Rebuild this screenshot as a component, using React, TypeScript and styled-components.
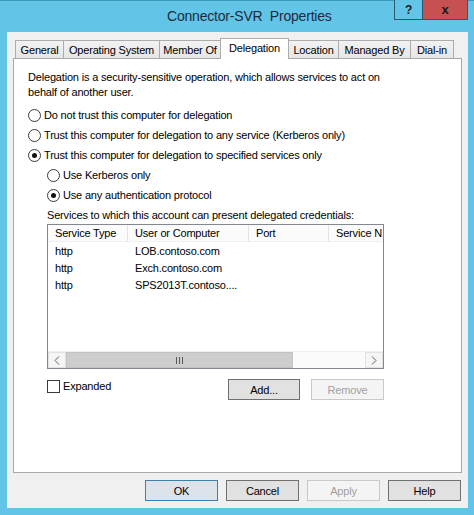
import { createGlobalStyle } from 'styled-components'
import styled from 'styled-components'

const GlobalStyle = createGlobalStyle`
  html, body {
    margin: 0;
    padding: 0;
    background: #62c4e6;
  }
  * {
    box-sizing: border-box;
  }
`

const Window = styled.div`
  width: 474px;
  height: 515px;
  background: #62c4e6;
  border-top: 1px solid #3d98b8;
  padding: 0 6px 7px 7px;
  display: flex;
  flex-direction: column;
  font-family: 'Liberation Sans', Arial, sans-serif;
  font-size: 11px;
  letter-spacing: -0.18px;
  color: #000;
`

const TitleBar = styled.div`
  height: 31px;
  display: flex;
  align-items: flex-start;
`

const Title = styled.div`
  flex: 1;
  padding-left: 160px;
  margin-top: 6px;
  font-size: 14px;
  letter-spacing: -0.2px;
  line-height: 18px;
  color: #1c2c3c;
  white-space: pre;
`

const CaptionButton = styled.div<{ $close?: boolean }>`
  width: ${(p) => (p.$close ? 46 : 29)}px;
  height: 20px;
  margin-top: -1px;
  margin-left: ${(p) => (p.$close ? -1 : 0)}px;
  border: 1px solid #2c5a6c;
  border-top: none;
  background: ${(p) => (p.$close ? '#c75050' : '#62c4e6')};
  color: #1a1a1a;
  font-weight: bold;
  font-size: ${(p) => (p.$close ? 13 : 12)}px;
  display: flex;
  align-items: center;
  justify-content: center;
`

const Body = styled.div`
  flex: 1;
  background: #f0f0f0;
  display: flex;
  flex-direction: column;
  padding: 6px 6px 7px 6px;
`

const TabStrip = styled.div`
  height: 20px;
  display: flex;
  align-items: flex-end;
  padding-left: 2px;
`

const Tab = styled.div<{ $width: number; $active?: boolean }>`
  position: relative;
  z-index: ${(p) => (p.$active ? 2 : 1)};
  width: ${(p) => p.$width}px;
  height: ${(p) => (p.$active ? 21 : 18)}px;
  margin-bottom: ${(p) => (p.$active ? -1 : 0)}px;
  margin-left: -1px;
  &:first-child {
    margin-left: 0;
  }
  border: 1px solid #acacac;
  border-bottom: none;
  background: ${(p) => (p.$active ? '#ffffff' : 'linear-gradient(#f2f2f2, #e6e6e6)')};
  display: flex;
  align-items: center;
  justify-content: center;
  padding-bottom: ${(p) => (p.$active ? 3 : 0)}px;
  white-space: nowrap;
`

const Panel = styled.div`
  flex: 1;
  background: #fff;
  border: 1px solid #a8a8a8;
  padding: 11px 0 0 14px;
  display: flex;
  flex-direction: column;
`

const Description = styled.div`
  line-height: 15px;
`

const RadioGroup = styled.div`
  margin-top: 5px;
  display: flex;
  flex-direction: column;
`

const RadioRow = styled.div<{ $indent?: number }>`
  height: 20px;
  display: flex;
  align-items: center;
  padding-left: ${(p) => p.$indent || 0}px;
`

const RadioCircle = styled.span<{ $checked?: boolean }>`
  width: 13px;
  height: 13px;
  border-radius: 50%;
  border: 1px solid #3a3a3a;
  background: #fff;
  margin-right: 3px;
  display: flex;
  align-items: center;
  justify-content: center;
  &::after {
    content: '';
    width: 5px;
    height: 5px;
    border-radius: 50%;
    background: ${(p) => (p.$checked ? '#111' : 'transparent')};
  }
`

const SectionLabel = styled.div`
  margin-top: 2px;
  padding-left: 19px;
  line-height: 16px;
`

const ListBox = styled.div`
  margin: 1px 0 0 19px;
  width: 337px;
  height: 145px;
  border: 1px solid #828790;
  display: flex;
  flex-direction: column;
  overflow: hidden;
`

const Columns = styled.div<{ $header?: boolean }>`
  display: grid;
  grid-template-columns: 80px 121px 80px 54px;
  height: 17px;
  flex-shrink: 0;
  background: ${(p) => (p.$header ? '#fbfbfb' : 'transparent')};
  border-bottom: ${(p) => (p.$header ? '1px solid #f0f0f0' : 'none')};
`

const Cell = styled.div<{ $header?: boolean }>`
  padding-left: 7px;
  display: flex;
  align-items: center;
  white-space: nowrap;
  overflow: hidden;
  border-right: ${(p) => (p.$header ? '1px solid #e3e3e3' : 'none')};
  &:last-child {
    border-right: none;
  }
`

const ListRows = styled.div`
  flex: 1;
`

const ScrollBar = styled.div`
  height: 17px;
  display: flex;
  background: #f0f0f0;
  border-top: 1px solid #f0f0f0;
`

const ScrollArrow = styled.div`
  width: 18px;
  display: flex;
  align-items: center;
  justify-content: center;
  background: #f5f5f5;
  border: 1px solid #e2e2e2;
`

const Thumb = styled.div<{ $width: number }>`
  width: ${(p) => p.$width}px;
  background: #cdcdcd;
  border: 1px solid #c2c2c2;
  display: flex;
  align-items: center;
  justify-content: center;
  gap: 2px;
`

const Grip = styled.span`
  width: 1px;
  height: 7px;
  background: #5a5a5a;
`

const Track = styled.div`
  flex: 1;
  background: #fafafa;
`

const ActionRow = styled.div`
  margin-top: 10px;
  padding-left: 19px;
  width: 356px;
  display: flex;
  align-items: flex-start;
`

const CheckLabel = styled.label`
  display: flex;
  align-items: center;
  margin-top: 1px;
  line-height: 13px;
  flex: 1;
`

const CheckBox = styled.span`
  width: 13px;
  height: 13px;
  border: 1px solid #3a3a3a;
  background: #fff;
  margin-right: 3px;
`

const Button = styled.button<{ $primary?: boolean; $width?: number }>`
  width: ${(p) => p.$width || 73}px;
  height: 21px;
  margin-left: ${(p) => (p.$width ? 11 : 0)}px;
  padding: 0;
  font-family: 'Liberation Sans', Arial, sans-serif;
  font-size: 11px;
  letter-spacing: -0.18px;
  color: #000;
  background: ${(p) => (p.$primary ? '#dde3ea' : '#e1e1e1')};
  border: 1px solid ${(p) => (p.$primary ? '#3c7fb1' : '#707070')};
  &:first-child {
    margin-left: 0;
  }
  &:disabled {
    color: #a0a0a0;
    background: #f4f4f4;
    border-color: #c9c9c9;
  }
`

const Footer = styled.div`
  display: flex;
  justify-content: flex-end;
  gap: 8px;
  padding: 7px 1px 0 0;
`

const tabs = [
  { label: 'General', width: 49 },
  { label: 'Operating System', width: 97 },
  { label: 'Member Of', width: 62 },
  { label: 'Delegation', width: 69, active: true },
  { label: 'Location', width: 51 },
  { label: 'Managed By', width: 73 },
  { label: 'Dial-in', width: 44 }
]

const services = [
  { type: 'http', host: 'LOB.contoso.com' },
  { type: 'http', host: 'Exch.contoso.com' },
  { type: 'http', host: 'SPS2013T.contoso....' }
]

const Chevron = ({ dir }: { dir: 'left' | 'right' }) => (
  <svg width='6' height='9' viewBox='0 0 6 9'>
    <path
      d={dir === 'left' ? 'M5 0.5 L1 4.5 L5 8.5' : 'M1 0.5 L5 4.5 L1 8.5'}
      fill='none'
      stroke='#606060'
      strokeWidth='1'
    />
  </svg>
)

const App = () => {
  return (
    <>
      <GlobalStyle />
      <Window>
        <TitleBar>
          <Title>{'Connector-SVR  Properties'}</Title>
          <CaptionButton>?</CaptionButton>
          <CaptionButton $close>x</CaptionButton>
        </TitleBar>
        <Body>
          <TabStrip>
            {tabs.map((t) => (
              <Tab key={t.label} $width={t.width} $active={t.active}>
                {t.label}
              </Tab>
            ))}
          </TabStrip>
          <Panel>
            <Description>
              Delegation is a security-sensitive operation, which allows services to act on
              <br />
              behalf of another user.
            </Description>
            <RadioGroup>
              <RadioRow>
                <RadioCircle />
                Do not trust this computer for delegation
              </RadioRow>
              <RadioRow>
                <RadioCircle />
                Trust this computer for delegation to any service (Kerberos only)
              </RadioRow>
              <RadioRow>
                <RadioCircle $checked />
                Trust this computer for delegation to specified services only
              </RadioRow>
              <RadioRow $indent={19}>
                <RadioCircle />
                Use Kerberos only
              </RadioRow>
              <RadioRow $indent={19}>
                <RadioCircle $checked />
                Use any authentication protocol
              </RadioRow>
            </RadioGroup>
            <SectionLabel>Services to which this account can present delegated credentials:</SectionLabel>
            <ListBox>
              <Columns $header>
                <Cell $header>Service Type</Cell>
                <Cell $header>User or Computer</Cell>
                <Cell $header>Port</Cell>
                <Cell $header>Service N</Cell>
              </Columns>
              <ListRows>
                {services.map((s) => (
                  <Columns key={s.host}>
                    <Cell>{s.type}</Cell>
                    <Cell>{s.host}</Cell>
                    <Cell />
                    <Cell />
                  </Columns>
                ))}
              </ListRows>
              <ScrollBar>
                <ScrollArrow>
                  <Chevron dir='left' />
                </ScrollArrow>
                <Thumb $width={227}>
                  <Grip />
                  <Grip />
                  <Grip />
                </Thumb>
                <Track />
                <ScrollArrow>
                  <Chevron dir='right' />
                </ScrollArrow>
              </ScrollBar>
            </ListBox>
            <ActionRow>
              <CheckLabel>
                <CheckBox />
                Expanded
              </CheckLabel>
              <Button $width={72}>Add...</Button>
              <Button $width={73} disabled>
                Remove
              </Button>
            </ActionRow>
          </Panel>
          <Footer>
            <Button $primary>OK</Button>
            <Button>Cancel</Button>
            <Button disabled>Apply</Button>
            <Button>Help</Button>
          </Footer>
        </Body>
      </Window>
    </>
  )
}

export default App
